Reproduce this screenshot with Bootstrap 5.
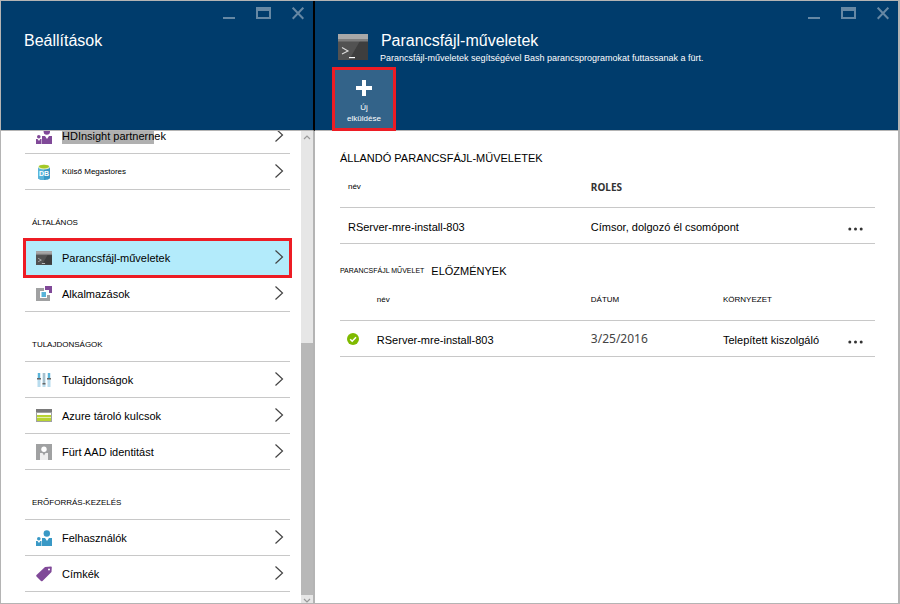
<!DOCTYPE html>
<html lang="hu">
<head>
<meta charset="utf-8">
<meta name="viewport" content="width=device-width, initial-scale=1">
<title>Parancsfájl-műveletek</title>
<link href="https://cdn.jsdelivr.net/npm/bootstrap@5.3.0/dist/css/bootstrap.min.css" rel="stylesheet">
<style>
body{font-family:"Liberation Sans",Arial,sans-serif;font-size:11px;line-height:16px;color:#000;background:#fff;border:1px solid #b4b4b4;border-right-width:2px}
h1,h2,h3{margin:0;font-weight:400}
.blade-settings{width:35%}
.blade-settings .blade-body{border-right:2px solid #b4b4b4}
.blade-head{background:#003c6c;color:#fff;min-height:130px;border-bottom:1px solid #b4b4b4}
.blade-settings .blade-head{border-right:2px solid #000}
.blade-head h1{font-size:16px;line-height:18px}
.window-bar{gap:21px;padding:6px 9px 0 0;height:24px}
.window-bar button{color:#6688a4;line-height:0}
.plain{background:none;border:0;padding:0}
.title-pad{padding:7px 0 0 23px}
.title-row{padding:7px 23px 2px 23px;gap:13px}
.title-row svg{margin-top:2px}
.title-row p{font-size:9px;line-height:14px;margin:1px 0 0 -1px}
.new-btn{width:64px;height:64px;margin:0 0 -1px 17px;background:#336389;border:3px solid #ed1c24;color:#fff;font-size:8px;line-height:11px;padding:6px 0 0}
.new-btn svg{margin-bottom:6px}
.menu{margin:-13px 0 0 24px;padding-right:11px}
.menu-row{height:36px;padding:0 6px 0 11px;border-bottom:1px solid #c8c8c8;color:#000;text-decoration:none;gap:10px}
.menu-row svg:first-child{width:16px;height:16px}
.menu-row svg:last-child{margin-bottom:2px}
.menu-row.current{background:#b3ebfb;outline:3px solid #ed1c24;outline-offset:-1px;border-color:#a5dced}
.menu h2{font-size:8px;line-height:10px;padding:28px 7px 11px;height:50px;border-bottom:1px solid #c8c8c8}
.menu h2.open{border-color:transparent}
.hit{background:#b0b0b0;padding:2px 0}
.tiny{font-size:8px}
.db{font:bold 7px "Liberation Sans",Arial,sans-serif}
.scroller{width:12px;background:#e6e6e6}
.scroller .top-part{flex:211 0 0;padding-top:2px}
.scroller .thumb{flex:253 0 0;background:#b8b8b8}
.scroller .end-part{height:8px}
.scroller div{line-height:0;text-align:center}
.content{padding:18px 23px 0 25px}
.content h2{font-size:11px;line-height:18px}
.content h2.history{padding-top:18px;gap:7px}
.history span{font-size:7px}
.content table{table-layout:fixed;width:100%;margin:0}
.content th{font-size:8px;line-height:12px;font-weight:400;height:40px;padding:14px 8px;border-bottom:1px solid #c8c8c8}
.content td{height:36px;padding:2px 8px 0;border-bottom:1px solid #c8c8c8;vertical-align:middle}
.content th.noto{font:bold 10px/12px "Noto Sans","Open Sans",sans-serif;color:#333}
.content td.noto{font:12px/16px "Noto Sans","Open Sans",sans-serif;color:#444;padding-top:0}
.c-name{width:45.4%}.c-icon{width:5.4%}.c-job{width:40%}.c-date{width:24.7%}.c-more{width:8%}
.content td.more{text-align:right;padding:6px 12px 0 0;line-height:0}
.content td.state{padding:0 0 0 7px;line-height:0}
</style>
<script src="https://cdn.jsdelivr.net/npm/bootstrap@5.3.0/dist/js/bootstrap.bundle.min.js"></script>
</head>
<body class="d-flex vh-100 overflow-hidden">
<svg class="d-none" aria-hidden="true">
  <symbol id="w-min" viewBox="0 0 12 13"><path d="M0 10h12v2H0z" fill="currentColor"/></symbol>
  <symbol id="w-max" viewBox="0 0 15 13"><path fill="currentColor" fill-rule="evenodd" d="M0 0h15v12H0zM2 4v6h11V4z"/></symbol>
  <symbol id="w-close" viewBox="0 0 12 13"><path d="M.7 .7l10.600 11M11.300 .7L.7 11.700" stroke="currentColor" stroke-width="2"/></symbol>
  <symbol id="chev" viewBox="0 0 10 16"><path d="M1.500 1.500L8.500 8l-7 6.500" fill="none" stroke="#444" stroke-width="1.200"/></symbol>
  <symbol id="term" viewBox="0 0 30 26"><path fill="#3e3e3e" d="M0 0h30v26H0z"/><path fill="#525252" d="M0 7h22L11 26H0z"/><path fill="#7d7d7d" d="M0 0h30v7.500H0z"/><path fill="#a8a8a8" d="M0 0h30v5H0z"/><path d="M4 13.500l6 3.500-6 3" fill="none" stroke="#ddd" stroke-width="1.100"/><path fill="#fff" d="M11 23h6v1.200h-6z"/></symbol>
  <symbol id="people" viewBox="0 0 16 16"><circle cx="10.800" cy="3.500" r="3.200" fill="currentColor"/><path fill="currentColor" d="M6 8h3l2 3 2-3h3v8H6z"/><circle cx="2.800" cy="8.800" r="1.800" fill="currentColor"/><path fill="currentColor" d="M0 11h1.500L3 13l1.300-2H5.500v5H0z"/></symbol>
  <symbol id="dots" viewBox="0 0 15 4"><g fill="#333"><circle cx="1.800" cy="2" r="1.500"/><circle cx="7.500" cy="2" r="1.500"/><circle cx="13.200" cy="2" r="1.500"/></g></symbol>
</svg>

<section class="blade-settings flex-shrink-0 d-flex flex-column">
  <header class="blade-head">
    <div class="window-bar d-flex justify-content-end align-items-start">
      <button class="plain" type="button" aria-label="Kis méret"><svg width="12" height="13"><use href="#w-min"/></svg></button>
      <button class="plain" type="button" aria-label="Teljes méret"><svg width="15" height="13"><use href="#w-max"/></svg></button>
      <button class="plain" type="button" aria-label="Bezárás"><svg width="12" height="13"><use href="#w-close"/></svg></button>
    </div>
    <div class="title-pad"><h1>Beállítások</h1></div>
  </header>
  <div class="blade-body d-flex flex-grow-1 overflow-hidden">
    <nav class="menu flex-grow-1">
      <a href="#" class="menu-row d-flex align-items-center"><svg viewBox="0 0 16 16" color="#804998"><use href="#people"/></svg><span class="me-auto"><span class="hit">HDInsight partnern</span>ek</span><svg width="10" height="16"><use href="#chev"/></svg></a>
      <a href="#" class="menu-row d-flex align-items-center"><svg viewBox="0 0 16 16"><path fill="#3999c6" d="M2 3h12v11c0 1-3 2-6 2s-6-1-6-2z"/><path fill="#59b4d9" d="M2 3h6v13c-3 0-6-1-6-2z"/><ellipse cx="8" cy="3" rx="6" ry="2.500" fill="#e8f0d0"/><ellipse cx="8" cy="2.600" rx="5" ry="1.800" fill="#a4c926"/><text class="db" x="8" y="12" text-anchor="middle" fill="#fff">DB</text></svg><span class="me-auto tiny">Külső Megastores</span><svg width="10" height="16"><use href="#chev"/></svg></a>
      <h2 class="open">ÁLTALÁNOS</h2>
      <a href="#" class="menu-row current d-flex align-items-center" aria-current="page"><svg viewBox="0 0 16 16"><use href="#term" y="1" width="16" height="14"/></svg><span class="me-auto">Parancsfájl-műveletek</span><svg width="10" height="16"><use href="#chev"/></svg></a>
      <a href="#" class="menu-row d-flex align-items-center"><svg viewBox="0 0 16 16"><path fill="#a0a1a2" d="M0 2h8v3H4v7h7V9h3v6H0z"/><path fill="#59b4d9" d="M5.500 6h4.500v5H5.500z"/><path fill="#804998" d="M9 0h7v7h-3V4H9z"/></svg><span class="me-auto">Alkalmazások</span><svg width="10" height="16"><use href="#chev"/></svg></a>
      <h2>TULAJDONSÁGOK</h2>
      <a href="#" class="menu-row d-flex align-items-center"><svg viewBox="0 0 16 16"><path fill="#b8dcee" d="M1.500 1h3v14h-3zM6.500 1h3v14h-3zM11.500 1h3v14h-3z"/><path fill="#59b4d9" d="M2 1h2v5H2zM12 1h2v5h-2z"/><path fill="#9aa4aa" d="M7.500 1h1v10h-1z"/><path fill="#666" d="M1 6h4v1.500H1zM11 6h4v1.500h-4zM6.500 11h3v1.500h-3z"/></svg><span class="me-auto">Tulajdonságok</span><svg width="10" height="16"><use href="#chev"/></svg></a>
      <a href="#" class="menu-row d-flex align-items-center"><svg viewBox="0 0 16 16"><path fill="#a0a1a2" d="M0 1h16v13H0z"/><path fill="#7a7a7a" d="M0 1h16v3H0z"/><path fill="#fff" d="M1 5h14v2H1z"/><path fill="#b8d432" d="M1 7h14v6H1z"/><path fill="#e4efad" d="M1 9h14v1H1z"/></svg><span class="me-auto">Azure tároló kulcsok</span><svg width="10" height="16"><use href="#chev"/></svg></a>
      <a href="#" class="menu-row d-flex align-items-center"><svg viewBox="0 0 16 16"><path fill="#a0a1a2" d="M0 0h16v16H0z"/><circle cx="8" cy="5.200" r="2.700" fill="#fff"/><path fill="#eee" d="M4 9h2.500L8 11.500 9.500 9H12v7H4z"/></svg><span class="me-auto">Fürt AAD identitást</span><svg width="10" height="16"><use href="#chev"/></svg></a>
      <h2>ERŐFORRÁS-KEZELÉS</h2>
      <a href="#" class="menu-row d-flex align-items-center"><svg viewBox="0 0 16 16" color="#3999c6"><use href="#people"/></svg><span class="me-auto">Felhasználók</span><svg width="10" height="16"><use href="#chev"/></svg></a>
      <a href="#" class="menu-row d-flex align-items-center"><svg viewBox="0 0 16 16"><path fill="#804998" fill-rule="evenodd" d="M9 1l6-.5q.8 0 .8.800L15.500 6 6.500 15q-.8.600-1.500 0L.5 10.500q-.7-.7 0-1.500zM13 2.500a1 1 0 100 2 1 1 0 000-2z"/></svg><span class="me-auto">Címkék</span><svg width="10" height="16"><use href="#chev"/></svg></a>
    </nav>
    <div class="scroller d-flex flex-column flex-shrink-0" aria-hidden="true">
      <div class="top-part"><svg width="8" height="8" viewBox="0 0 8 8"><path d="M1 6l3-3 3 3" fill="none" stroke="#999" stroke-width="1.200"/></svg></div>
      <div class="thumb"></div>
      <div class="end-part"><svg width="8" height="8" viewBox="0 0 8 8"><path d="M1 4l3 3 3-3" fill="none" stroke="#999" stroke-width="1.200"/></svg></div>
    </div>
  </div>
</section>

<section class="flex-grow-1 d-flex flex-column">
  <header class="blade-head">
    <div class="window-bar d-flex justify-content-end align-items-start">
      <button class="plain" type="button" aria-label="Kis méret"><svg width="12" height="13"><use href="#w-min"/></svg></button>
      <button class="plain" type="button" aria-label="Teljes méret"><svg width="15" height="13"><use href="#w-max"/></svg></button>
      <button class="plain" type="button" aria-label="Bezárás"><svg width="12" height="13"><use href="#w-close"/></svg></button>
    </div>
    <div class="title-row d-flex">
      <svg class="flex-shrink-0" width="30" height="26"><use href="#term"/></svg>
      <div><h1>Parancsfájl-műveletek</h1><p>Parancsfájl-műveletek segítségével Bash parancsprogramokat futtassanak a fürt.</p></div>
    </div>
    <button class="new-btn d-block text-center" type="button"><svg width="16" height="16" viewBox="0 0 16 16"><path d="M6 0h4v6h6v4h-6v6H6v-6H0V6h6z" fill="#fff"/></svg><br>Új<br>elküldése</button>
  </header>
  <main class="content">
    <h2>ÁLLANDÓ PARANCSFÁJL-MŰVELETEK</h2>
    <table>
      <thead><tr><th class="c-name">név</th><th class="noto">ROLES</th><th class="c-more"></th></tr></thead>
      <tbody><tr><td>RServer-mre-install-803</td><td>Címsor, dolgozó él csomópont</td><td class="more"><button class="plain" type="button" aria-label="Továbbiak"><svg width="15" height="4"><use href="#dots"/></svg></button></td></tr></tbody>
    </table>
    <h2 class="history d-flex"><span>PARANCSFÁJL MŰVELET</span>ELŐZMÉNYEK</h2>
    <table>
      <thead><tr><th class="c-icon"></th><th class="c-job">név</th><th class="c-date">DÁTUM</th><th>KÖRNYEZET</th><th class="c-more"></th></tr></thead>
      <tbody><tr><td class="state"><svg width="12" height="12" viewBox="0 0 12 12" role="img" aria-label="Sikeres"><circle cx="6" cy="6" r="6" fill="#7fba00"/><path d="M3.200 6.200l2 2 3.800-4" fill="none" stroke="#fff" stroke-width="1.500"/></svg></td><td>RServer-mre-install-803</td><td class="noto">3/25/2016</td><td class="text-nowrap">Telepített kiszolgáló</td><td class="more"><button class="plain" type="button" aria-label="Továbbiak"><svg width="15" height="4"><use href="#dots"/></svg></button></td></tr></tbody>
    </table>
  </main>
</section>
</body>
</html>
